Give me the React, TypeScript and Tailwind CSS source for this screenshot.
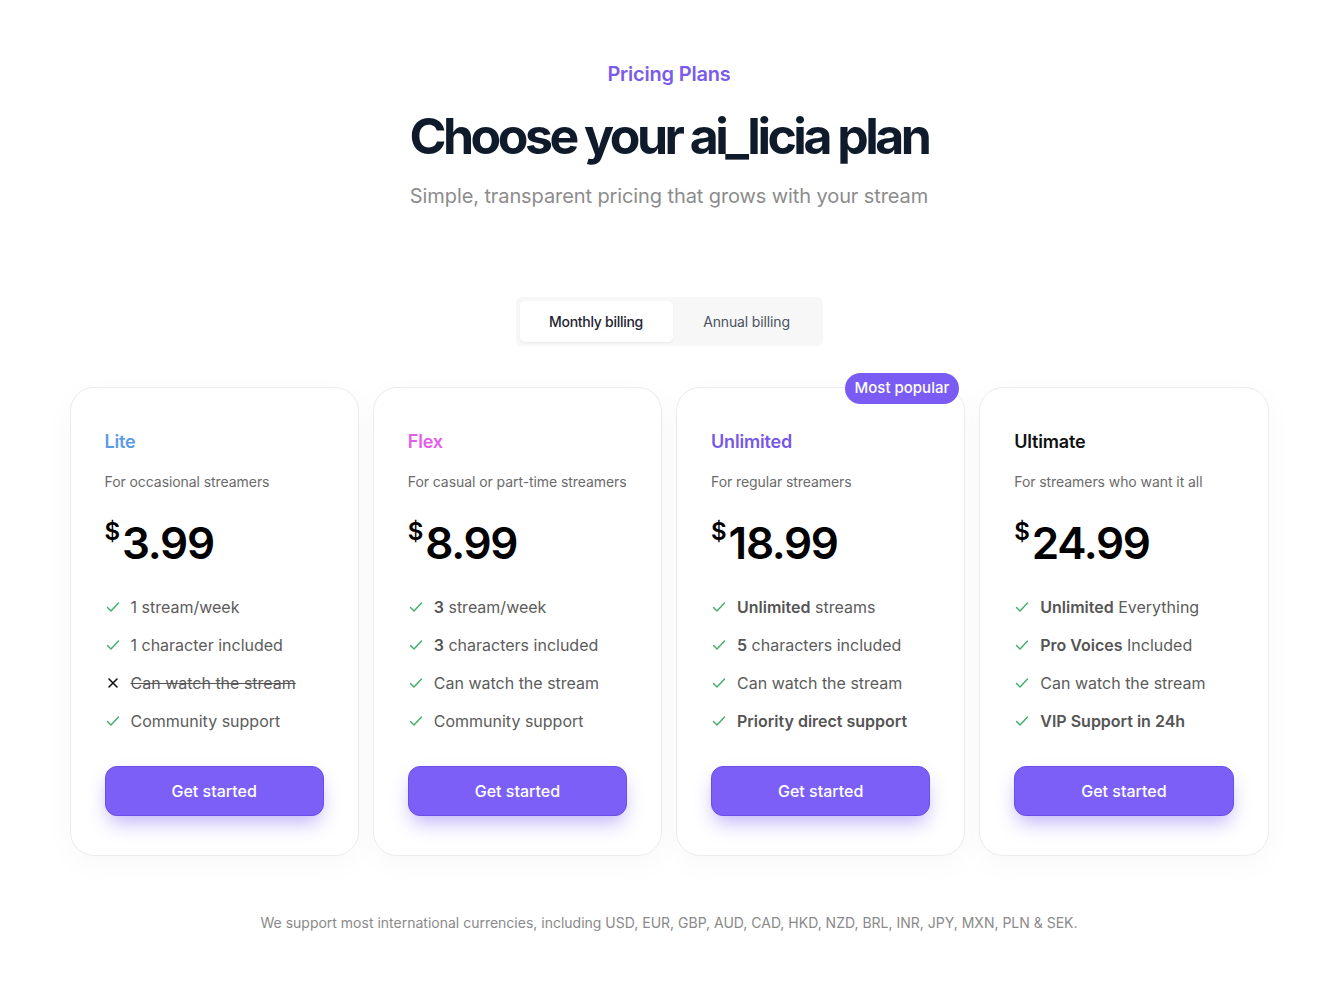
import React from "react";

type Feature = { bold?: string; text: string; excluded?: boolean };
type Plan = {
  name: string;
  color: string;
  desc: string;
  price: string;
  features: Feature[];
  popular?: boolean;
};

const plans: Plan[] = [
  {
    name: "Lite",
    color: "text-[#5b9be6]",
    desc: "For occasional streamers",
    price: "3.99",
    features: [
      { text: "1 stream/week" },
      { text: "1 character included" },
      { text: "Can watch the stream", excluded: true },
      { text: "Community support" },
    ],
  },
  {
    name: "Flex",
    color: "text-[#e35de6]",
    desc: "For casual or part-time streamers",
    price: "8.99",
    features: [
      { bold: "3", text: " stream/week" },
      { bold: "3", text: " characters included" },
      { text: "Can watch the stream" },
      { text: "Community support" },
    ],
  },
  {
    name: "Unlimited",
    color: "text-[#7657ea]",
    desc: "For regular streamers",
    price: "18.99",
    popular: true,
    features: [
      { bold: "Unlimited", text: " streams" },
      { bold: "5", text: " characters included" },
      { text: "Can watch the stream" },
      { bold: "Priority direct support", text: "" },
    ],
  },
  {
    name: "Ultimate",
    color: "text-[#111111]",
    desc: "For streamers who want it all",
    price: "24.99",
    features: [
      { bold: "Unlimited", text: " Everything" },
      { bold: "Pro Voices", text: " Included" },
      { text: "Can watch the stream" },
      { bold: "VIP Support in 24h", text: "" },
    ],
  },
];

function Check() {
  return (
    <svg width="16" height="16" viewBox="0 0 16 16" fill="none" className="shrink-0">
      <path d="M2.5 8.5 L6 12 L13.5 4" stroke="#3fae6a" strokeWidth="1.4" strokeLinecap="round" strokeLinejoin="round" />
    </svg>
  );
}

function Cross() {
  return (
    <svg width="16" height="16" viewBox="0 0 16 16" fill="none" className="shrink-0">
      <path d="M4 4 L12 12 M12 4 L4 12" stroke="#111" strokeWidth="1.6" strokeLinecap="round" />
    </svg>
  );
}

function Card({ plan }: { plan: Plan }) {
  return (
    <div className="relative h-[469px] rounded-[24px] border border-[#ececee] bg-white px-[34px] pt-[42px] shadow-[0_8px_30px_rgba(20,20,40,0.03)]">
      {plan.popular && (
        <div className="absolute right-[5px] top-[-15px] flex h-[31px] items-center rounded-full bg-[#7a5cf4] px-[10px] text-[15px] font-medium text-white">
          Most popular
        </div>
      )}
      <div className={`h-[24px] text-[18px] font-semibold leading-[24px] tracking-[-0.01em] ${plan.color}`}>{plan.name}</div>
      <div className="mt-[18px] whitespace-nowrap text-[14px] leading-[20px] tracking-[-0.005em] text-[#6b6b6b]">{plan.desc}</div>
      <div className="mt-[27px] flex h-[48px] items-start text-black">
        <span className="mt-[-1px] text-[24px] font-semibold leading-[28px]">$</span>
        <span className="ml-[2px] text-[44px] font-semibold leading-[48px] tracking-[-0.03em]">{plan.price}</span>
      </div>
      <ul className="mt-[28px] flex flex-col gap-[14px]">
        {plan.features.map((f, i) => (
          <li key={i} className="flex h-[24px] items-center gap-[10px] text-[16px] leading-[24px] text-[#5c5c5c]">
            {f.excluded ? <Cross /> : <Check />}
            <span className={f.excluded ? "line-through decoration-[#555]" : ""}>
              {f.bold && <span className="font-semibold text-[#555]">{f.bold}</span>}
              {f.text}
            </span>
          </li>
        ))}
      </ul>
      <button className="mt-[33px] h-[50px] w-full rounded-[12px] border border-[#6a4fe6] bg-[#7b5ff6] text-[16px] font-medium text-white shadow-[0_10px_20px_-4px_rgba(111,80,240,0.45)]">
        Get started
      </button>
    </div>
  );
}

export default function App() {
  return (
    <div className="min-h-[997px] bg-white text-[#111]" style={{ fontFamily: "Inter, 'Noto Sans', sans-serif" }}>
      <div className="flex flex-col items-center pl-[9px] pt-[60px]">
        <div className="text-[20px] font-semibold leading-[28px] tracking-[-0.01em] text-[#7b5ce8]">Pricing Plans</div>
        <h1 className="mt-[22px] text-[50px] font-bold leading-[52px] tracking-[-0.07em] text-[#0f1b2a]">
          Choose your ai_licia plan
        </h1>
        <p className="mt-[20px] text-[20px] leading-[28px] tracking-[-0.005em] text-[#8c8c8c]">
          Simple, transparent pricing that grows with your stream
        </p>
        <div className="mt-[87px] flex h-[49px] w-[307px] items-center gap-[2px] rounded-[6px] bg-[#f7f7f8] p-[4px]">
          <div className="flex h-[41px] w-[153px] items-center justify-center rounded-[5px] bg-white text-[14px] font-medium tracking-[-0.02em] text-[#1d2530] shadow-[0_1px_2px_rgba(0,0,0,0.06)]">
            Monthly billing
          </div>
          <div className="flex h-[41px] flex-1 items-center justify-center text-[14px] tracking-[-0.01em] text-[#4b5260]">
            Annual billing
          </div>
        </div>
        <div className="mt-[41px] grid w-[1199px] grid-cols-4 gap-[14px]">
          {plans.map((p) => (
            <Card key={p.name} plan={p} />
          ))}
        </div>
        <p className="mt-[57px] text-[14px] leading-[20px] text-[#8a8a8a]">
          We support most international currencies, including USD, EUR, GBP, AUD, CAD, HKD, NZD, BRL, INR, JPY, MXN, PLN &amp; SEK.
        </p>
      </div>
    </div>
  );
}
